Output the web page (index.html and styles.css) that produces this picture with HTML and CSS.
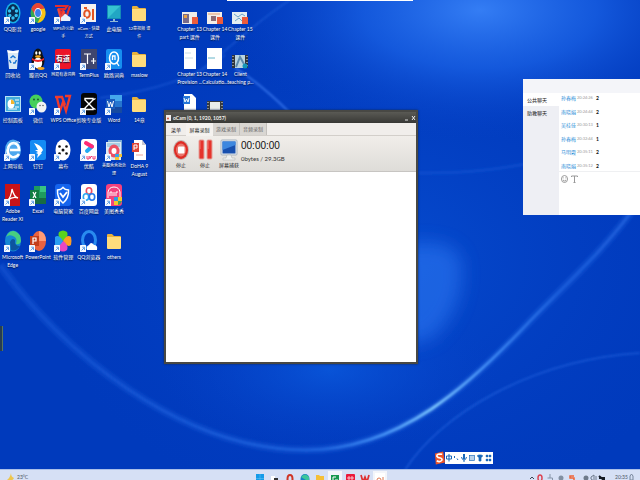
FILE: index.html
```
<!DOCTYPE html>
<html lang="zh-CN">
<head>
<meta charset="utf-8">
<title>oCam</title>
<link rel="stylesheet" href="styles.css">
</head>
<body>
<svg class="wallpaper" viewBox="0 0 640 480" preserveAspectRatio="none" aria-hidden="true">
  <defs>
    <radialGradient id="g1"><stop offset="0" stop-color="#347df4"/><stop offset=".45" stop-color="#1a62e6" stop-opacity=".75"/><stop offset="1" stop-color="#0640c8" stop-opacity="0"/></radialGradient>
    <radialGradient id="g2"><stop offset="0" stop-color="#2a73ee"/><stop offset="1" stop-color="#0c4cd4" stop-opacity="0"/></radialGradient>
    <radialGradient id="g3"><stop offset="0" stop-color="#0a58dc"/><stop offset="1" stop-color="#0640c8" stop-opacity="0"/></radialGradient>
    <linearGradient id="arc" gradientUnits="userSpaceOnUse" x1="0" y1="0" x2="640" y2="0"><stop offset="0" stop-color="#2a6ce8" stop-opacity=".2"/><stop offset=".5" stop-color="#2f7bf0" stop-opacity=".55"/><stop offset=".6" stop-color="#4a98fa" stop-opacity=".9"/><stop offset=".68" stop-color="#7cc6ff"/><stop offset=".76" stop-color="#4f9cff" stop-opacity=".8"/><stop offset=".88" stop-color="#2a70ea" stop-opacity=".5"/><stop offset="1" stop-color="#3a7cf0" stop-opacity=".5"/></linearGradient>
    <filter id="soft"><feGaussianBlur stdDeviation="1"/></filter>
    <filter id="haze" x="-50%" y="-50%" width="200%" height="200%"><feGaussianBlur stdDeviation="9"/></filter>
  </defs>
  <rect width="640" height="480" fill="#003abc"/>
  <ellipse cx="380" cy="260" rx="340" ry="260" fill="url(#g3)" opacity=".6"/>
  <ellipse cx="480" cy="10" rx="260" ry="130" fill="url(#g1)"/>
  <ellipse cx="330" cy="370" rx="170" ry="80" fill="url(#g3)" opacity=".8"/>
  <path d="M400 245Q455 236 461 262Q466 310 430 340L400 345Z" fill="#2870ec" opacity=".7" filter="url(#haze)"/>
  <g fill="none" filter="url(#soft)">
    <path d="M0 265C60 350 180 450 306 450C400 450 470 385 531 320C570 280 605 250 640 200" stroke="#2a70ea" stroke-opacity=".2" stroke-width="9"/>
    <path d="M0 265C60 350 180 450 306 450C400 450 470 385 531 320C570 280 605 250 640 200" stroke="url(#arc)" stroke-width="3"/>
    <path d="M405 470C440 415 530 360 640 353" stroke="#2f74ea" stroke-opacity=".4" stroke-width="2"/>
    <path d="M180 85C225 55 250 25 290 0M100 98C160 90 200 75 225 55" stroke="#3c7cf0" stroke-opacity=".3" stroke-width="2"/>
    <path d="M235 68C255 80 275 98 292 115" stroke="#4c8cff" stroke-opacity=".6" stroke-width="2"/>
    <path d="M418 173Q530 175 640 130" stroke="#2566e0" stroke-opacity=".3" stroke-width="3"/>
  </g>
</svg>
<svg width="0" height="0" class="sprite" aria-hidden="true">
  <symbol id="link" viewBox="0 0 6 7"><rect width="6" height="7" rx=".5" fill="#f5f9ff"/><path d="M1.5 5.5L4 3M2.2 2.2H4.5V5" fill="none" stroke="#3f8be0" stroke-width=".8"/></symbol>
  <symbol id="folder" viewBox="0 0 18 22"><path d="M2 5Q2 4 3 4H7L9 6H15Q16 6 16 7V18H2Z" fill="#e8b23c"/><path d="M2 7H16V18Q16 19 15 19H3Q2 19 2 18Z" fill="#ffdc7c"/></symbol>
</svg>

<main class="desktop">
  <nav class="icons apps" aria-label="桌面">
    <a href="#"><svg viewBox="0 0 18 22"><ellipse cx="9" cy="11" rx="7.5" ry="10.5" fill="#17aee8"/><ellipse cx="9" cy="11" rx="6" ry="9" fill="#092b52"/><g fill="#35bdf2"><circle cx="9" cy="6" r="1.7"/><circle cx="9" cy="16" r="1.7"/><circle cx="5.5" cy="9" r="1.7"/><circle cx="12.5" cy="9" r="1.7"/><circle cx="5.8" cy="13.5" r="1.7"/><circle cx="12.2" cy="13.5" r="1.7"/></g><use href="#link" y="15" width="6" height="7"/></svg><span>QQ影音</span></a>
    <a href="#"><svg viewBox="0 0 18 22"><ellipse cx="9" cy="11" rx="7.5" ry="10" fill="#34a853"/><path d="M2.3 6.5Q5 1 9 1T15.7 6.5L9 8Z" fill="#ea4335"/><path d="M15.7 6.5Q18 13 14 18Q11 21 8.5 21L12.5 13L11 7.3Z" fill="#fbc116"/><path d="M2.3 6.5L6 13L9 7Z" fill="#ea4335"/><ellipse cx="9" cy="11" rx="3.7" ry="5" fill="#fff"/><ellipse cx="9" cy="11" rx="2.9" ry="4" fill="#3b7ded"/><use href="#link" y="15" width="6" height="7"/></svg><span>google</span></a>
    <a href="#"><svg viewBox="0 0 18 22"><path d="M1 4H13L11 7H5L7 12L9 8L12 16L16 4" fill="none" stroke="#e62e2d" stroke-width="2.2"/><path d="M4 7L7 17L10 9" fill="none" stroke="#ef4b3d" stroke-width="2"/><path d="M7 19Q6 15 9 14Q11 10 14 14Q18 15 16 19Z" fill="#eaf1fb"/><use href="#link" y="15" width="6" height="7"/></svg><span class="long">WPS办公助<br>手</span></a>
    <a href="#"><svg viewBox="0 0 18 22"><rect x="1" y="2" width="15" height="18" fill="#f5f2f0"/><ellipse cx="7" cy="12" rx="2.8" ry="3.7" fill="none" stroke="#e45423" stroke-width="2"/><path d="M12 7H14V18H12ZM4 5H7V7H4Z" fill="#e45423"/><use href="#link" y="15" width="6" height="7"/></svg><span class="long">oCam - 快捷<br>方式</span></a>
    <a href="#"><svg viewBox="0 0 18 22"><rect x="2" y="3" width="14" height="14" fill="#148bb5"/><path d="M3 4H15V16H3Z" fill="#36c2d2"/><path d="M3 16L15 4V16Z" fill="#21a6c4"/><path d="M8 17H10V19H13V20H5V19H8Z" fill="#8fb7d6"/></svg><span>此电脑</span></a>
    <a href="#"><svg viewBox="0 0 18 22"><use href="#folder"/></svg><span class="long">12章视频 课<br>件</span></a>

    <a href="#"><svg viewBox="0 0 18 22"><path d="M3.500 3H14.500L13 21H5Z" fill="#dbe9f5"/><path d="M3 2L9 3L15 2L14 5H4Z" fill="#fff"/><path d="M6.500 10L9 8L11.500 10M12.500 12L11 15H9M7 15L5.500 12" fill="none" stroke="#1c76d2" stroke-width="1.5"/></svg><span>回收站</span></a>
    <a href="#"><svg viewBox="0 0 18 22"><ellipse cx="9" cy="13" rx="6.5" ry="8" fill="#111"/><ellipse cx="9" cy="7" rx="4.5" ry="6.5" fill="#111"/><ellipse cx="9" cy="15" rx="4.2" ry="5.5" fill="#fff"/><path d="M3 10Q9 14 15 10L15 12Q9 16 3 12Z" fill="#e8252a"/><ellipse cx="7.3" cy="5" rx="1.1" ry="1.8" fill="#fff"/><ellipse cx="10.7" cy="5" rx="1.1" ry="1.8" fill="#fff"/><ellipse cx="9" cy="8.5" rx="3" ry="1.2" fill="#f6a81c"/><ellipse cx="12" cy="20.5" rx="3.5" ry="1.4" fill="#f6a81c"/><use href="#link" y="15" width="6" height="7"/></svg><span>腾讯QQ</span></a>
    <a href="#"><svg viewBox="0 0 18 22"><rect x="1" y="1" width="16" height="20" rx="2" fill="#ec1528"/><text x="9" y="13" class="mark">有道</text><use href="#link" y="15" width="6" height="7"/></svg><span class="long">网易有道词典</span></a>
    <a href="#"><svg viewBox="0 0 18 22"><rect x="1" y="1" width="16" height="20" fill="#40466e"/><path d="M4 6H11M7.5 6V16M11 13H16M13.5 10V16" fill="none" stroke="#fff" stroke-width="1.2"/><use href="#link" y="15" width="6" height="7"/></svg><span>TermPlus</span></a>
    <a href="#"><svg viewBox="0 0 18 22"><rect x="1" y="1" width="16" height="20" rx="2" fill="#168ff0"/><ellipse cx="9" cy="10" rx="4.5" ry="6" fill="none" stroke="#fff" stroke-width="1.5"/><path d="M7.5 12V8H10V12M12 15L14 18" fill="none" stroke="#fff" stroke-width="1.3"/><use href="#link" y="15" width="6" height="7"/></svg><span>欧路词典</span></a>
    <a href="#"><svg viewBox="0 0 18 22"><use href="#folder"/></svg><span>maslow</span></a>

    <a href="#"><svg viewBox="0 0 18 22"><rect x="1" y="3" width="16" height="16" fill="#b8e3f5"/><rect x="2" y="4" width="14" height="14" fill="#43addc"/><ellipse cx="7" cy="11" rx="3.4" ry="4.5" fill="#fff"/><path d="M7 11V6.5Q10.5 7 10.5 11Z" fill="#f4b52c"/><path d="M11 7H15M12 10H15M11 14H15M4 16H13" stroke="#fff"/></svg><span>控制面板</span></a>
    <a href="#"><svg viewBox="0 0 18 22"><ellipse cx="7" cy="8.500" rx="6.500" ry="7" fill="#45cf5b"/><circle cx="5" cy="6.500" r=".9" fill="#174f2b"/><circle cx="9" cy="6.500" r=".9" fill="#174f2b"/><ellipse cx="12.500" cy="14" rx="5" ry="5.500" fill="#f0f2f2"/><circle cx="11" cy="12.500" r=".8" fill="#666"/><circle cx="14" cy="12.500" r=".8" fill="#666"/><use href="#link" y="15" width="6" height="7"/></svg><span>微信</span></a>
    <a href="#"><svg viewBox="0 0 18 22"><path d="M1 4H8L11 12M3 5L6 18L9 9L12 18L16 3H11" fill="none" stroke="#ef3b2d" stroke-width="2.300"/><use href="#link" y="15" width="6" height="7"/></svg><span>WPS Office</span></a>
    <a href="#"><svg viewBox="0 0 18 22"><rect x="1" y="0" width="16" height="22" rx="3" fill="#050505"/><path d="M5 5.500H13V7L9 11L5 7ZM5 16.500H13V15L9 11L5 15ZM13 7L15.500 5.500M13 15L15.500 16.500" fill="none" stroke="#fff" stroke-width="1.400"/><use href="#link" y="15" width="6" height="7"/></svg><span>剪映专业版</span></a>
    <a href="#"><svg viewBox="0 0 18 22"><path d="M5 2H17V8H5Z" fill="#45a7ec"/><path d="M5 8H17V14H5Z" fill="#2676cf"/><path d="M5 14H17V20H5Z" fill="#164aa0"/><rect x="1" y="6" width="9" height="10" fill="#1a5cbd"/><path d="M2.500 8L4 14L5.500 9L7 14L8.500 8" fill="none" stroke="#fff"/><use href="#link" y="15" width="6" height="7"/></svg><span>Word</span></a>
    <a href="#"><svg viewBox="0 0 18 22"><use href="#folder"/></svg><span>14章</span></a>

    <a href="#"><svg viewBox="0 0 18 22"><ellipse cx="9" cy="11" rx="8" ry="10.500" fill="#4ea8ee"/><path d="M15 15Q12 19 8 18Q3 16 4 10Q5 4 10 4Q15 5 15 11H6" fill="none" stroke="#fff" stroke-width="2.600"/><path d="M2 17Q0 12 7 6Q14 1 16 4" fill="none" stroke="#dff1ff"/><use href="#link" y="15" width="6" height="7"/></svg><span>上网导航</span></a>
    <a href="#"><svg viewBox="0 0 18 22"><rect x="1" y="1" width="16" height="20" rx="2" fill="#148bf4"/><path d="M5 4Q12 6 14 11L12 14H13L8 19L9 15L7 14L9 13L6 11L9 11Z" fill="#fff"/><use href="#link" y="15" width="6" height="7"/></svg><span>钉钉</span></a>
    <a href="#"><svg viewBox="0 0 18 22"><ellipse cx="9" cy="11" rx="7.500" ry="10.500" fill="#fff"/><g fill="#111"><circle cx="5.500" cy="7.500" r="1.300"/><circle cx="12.500" cy="7.500" r="1.300"/><circle cx="9" cy="11" r="1.500"/><circle cx="5.500" cy="14.500" r="1.300"/><circle cx="12.500" cy="14.500" r="1.300"/></g><use href="#link" y="15" width="6" height="7"/></svg><span>幕布</span></a>
    <a href="#"><svg viewBox="0 0 18 22"><rect x="1" y="0" width="16" height="22" rx="3" fill="#fff"/><path d="M7 12L12 7.500" stroke="#21aaf3" stroke-width="4" stroke-linecap="round"/><path d="M6 4L12 7.500" stroke="#ff2b75" stroke-width="4" stroke-linecap="round"/><path d="M7 17V20H9V17M10 20V17M12 17L10 19M13 17V20H15V17" fill="none" stroke="#ef3a74"/><use href="#link" y="15" width="6" height="7"/></svg><span>优酷</span></a>
    <a href="#"><svg viewBox="0 0 18 22"><path d="M3 1H17V18H3Z" fill="#7cadd8"/><rect x="1" y="3" width="15" height="18" fill="#dce9f3"/><path d="M2 4H15V8H2Z" fill="#a9cfe4"/><ellipse cx="9" cy="12" rx="5.500" ry="6.500" fill="#ec5063"/><ellipse cx="9" cy="12" rx="2.500" ry="3" fill="#fff"/><path d="M10 15H14V18H10Z" fill="#39a3e9"/><path d="M14 15H17V18H14ZM10 18H14V21H10Z" fill="#f7c332"/><use href="#link" y="15" width="6" height="7"/></svg><span class="long">美图秀秀批处<br>理</span></a>
    <a href="#"><svg viewBox="0 0 18 22"><path d="M4 1H12L16 6V21H4Z" fill="#fff"/><path d="M12 1V6H16" fill="#c8c8d0"/><rect x="2" y="4" width="7" height="9" fill="#dd4638"/><path d="M4 11V6H7V9H4" fill="none" stroke="#fff"/><path d="M6 16H13" stroke="#e9a69d"/></svg><span>DoHA 9<br>August</span></a>

    <a href="#"><svg viewBox="0 0 18 22"><rect x="1" y="0" width="15" height="22" fill="#c91318"/><path d="M4 16Q7 13 8 5Q10 13 14 14Q9 12 4 16" fill="none" stroke="#fff" stroke-width="1.300"/><use href="#link" y="15" width="6" height="7"/></svg><span>Adobe<br>Reader XI</span></a>
    <a href="#"><svg viewBox="0 0 18 22"><path d="M5 2H17V20H5Z" fill="#1f9b5e"/><path d="M11 2H17V8H11Z" fill="#39c481"/><path d="M5 14H17V20H5Z" fill="#176c42"/><rect x="1" y="6" width="9" height="10" fill="#107c41"/><path d="M4 8L7 14M7 8L4 14" stroke="#fff" stroke-width="1.200"/><use href="#link" y="15" width="6" height="7"/></svg><span>Excel</span></a>
    <a href="#"><svg viewBox="0 0 18 22"><rect x="1" y="0" width="16" height="22" rx="3" fill="#1564ed"/><path d="M3.500 6Q7 6 9 3.500Q11 6 14.500 6Q15 14 9 19Q3 14 3.500 6Z" fill="none" stroke="#fff" stroke-width="1.500"/><path d="M6 9L9 13L13 8" fill="none" stroke="#fff" stroke-width="1.800"/><use href="#link" y="15" width="6" height="7"/></svg><span>电脑管家</span></a>
    <a href="#"><svg viewBox="0 0 18 22"><rect x="1" y="0" width="16" height="22" rx="3" fill="#fff"/><g fill="none" stroke-width="1.600"><ellipse cx="9" cy="7" rx="2.700" ry="3.200" stroke="#ef4d62"/><ellipse cx="6" cy="13" rx="2.700" ry="3.200" stroke="#2aa8f2"/><ellipse cx="12" cy="13" rx="2.700" ry="3.200" stroke="#2678ec"/></g><use href="#link" y="15" width="6" height="7"/></svg><span>百度网盘</span></a>
    <a href="#"><svg viewBox="0 0 18 22"><rect x="1" y="0" width="16" height="22" rx="3" fill="#f4417d"/><path d="M3 14V8Q4 3 9 3T15 8V14M5 12V8H7V12M9 12V8M11 12V8H13" fill="none" stroke="#fff"/><path d="M9 13H13V17H9Z" fill="#2f9be7"/><path d="M13 13H17V17H13Z" fill="#f8c52d"/><path d="M9 17H13V21H9Z" fill="#f8c52d"/><path d="M13 17H17Q16 20 13 21Z" fill="#43a957"/><use href="#link" y="15" width="6" height="7"/></svg><span>美图秀秀</span></a>
    <i></i>

    <a href="#"><svg viewBox="0 0 18 22"><ellipse cx="9" cy="11" rx="8" ry="10.500" fill="#1587d4"/><path d="M2 7Q5 0 10 1Q17 3 17 11Q16 15 12 14Q14 8 9 6Q5 4 2 7Z" fill="#48cf80"/><path d="M6 12Q8 7 11 10Q10 16 16 16Q12 22 7 20Z" fill="#0d549f"/><use href="#link" y="15" width="6" height="7"/></svg><span>Microsoft<br>Edge</span></a>
    <a href="#"><svg viewBox="0 0 18 22"><ellipse cx="10" cy="11" rx="7" ry="10" fill="#e96240"/><path d="M10 1Q17 2 17 11H10Z" fill="#ff9b76"/><rect x="1" y="6" width="9" height="10" fill="#c43e1c"/><path d="M4 14V8H7V11H4" fill="none" stroke="#fff" stroke-width="1.200"/><use href="#link" y="15" width="6" height="7"/></svg><span>PowerPoint</span></a>
    <a href="#"><svg viewBox="0 0 18 22"><path d="M9 11Q3 7 5 2Q9-1 13 2Q15 7 9 11Z" fill="#5ad31f"/><path d="M9 11Q13 4 17 7Q18 11 17 15Q13 18 9 11Z" fill="#ff9e25"/><path d="M9 11Q15 15 13 20Q9 23 5 20Q3 15 9 11Z" fill="#e947c2"/><path d="M9 11Q5 18 1 15V7Q5 4 9 11Z" fill="#299df1"/><use href="#link" y="15" width="6" height="7"/></svg><span>软件管理</span></a>
    <a href="#"><svg viewBox="0 0 18 22"><ellipse cx="9" cy="10" rx="6.500" ry="8.500" fill="none" stroke="#298bef" stroke-width="3"/><path d="M7 20Q6 16 9 15Q11 11 14 15Q18 15 17 20Z" fill="#fff"/><use href="#link" y="15" width="6" height="7"/></svg><span>QQ浏览器</span></a>
    <a href="#"><svg viewBox="0 0 18 22"><use href="#folder"/></svg><span>others</span></a>
  </nav>
  <nav class="icons files" aria-label="文件">
    <a href="#"><svg viewBox="0 0 18 22"><rect x="1" y="10" width="15" height="12" fill="#eeece8"/><path d="M2 12H8V21H2Z" fill="#776b8b"/><path d="M3 13H6V16H3Z" fill="#e8a242"/><rect x="11" y="15" width="6" height="7" fill="#ed5c3c"/></svg><span>Chapter 13<br>part 课件</span></a>
    <a href="#"><svg viewBox="0 0 18 22"><rect x="1" y="10" width="15" height="12" fill="#f3eee9"/><path d="M2 12H14" stroke="#e4a071"/><rect x="5" y="14" width="5" height="5" fill="#8b6c76"/><rect x="11" y="15" width="6" height="7" fill="#ed5c3c"/></svg><span>Chapter 14<br>课件</span></a>
    <a href="#"><svg viewBox="0 0 18 22"><rect x="1" y="10" width="15" height="12" fill="#e3eef1"/><path d="M3 12L7 15L11 12L14 14M4 19L8 16L11 19" fill="none" stroke="#6ba5ca"/><rect x="11" y="15" width="6" height="7" fill="#ed5c3c"/></svg><span>Chapter 15<br>课件</span></a>
    <a href="#"><svg viewBox="0 0 18 22"><rect x="3" y="1" width="12" height="21" fill="#fff"/><path d="M4 11H12M4 6H10" stroke="#c9dce6"/></svg><span>Chapter 13<br>Provision ...</span></a>
    <a href="#"><svg viewBox="0 0 18 22"><rect x="1" y="1" width="15" height="21" fill="#fff"/><path d="M2 11H9" stroke="#66b4c8"/></svg><span>Chapter 14<br>Calculatio...</span></a>
    <a href="#"><svg viewBox="0 0 18 22"><rect x="1" y="8" width="16" height="13" fill="#30343b"/><rect x="4" y="8" width="10" height="13" fill="#b9d4e2"/><path d="M2 9V21M16 9V21" stroke="#e5e8e9" stroke-dasharray="1 2"/><path d="M5 20L9 10L13 17" fill="none" stroke="#5e8bae" stroke-width="2"/><circle cx="14" cy="19" r="2.500" fill="#1495b7"/></svg><span>Client<br>teaching p...</span></a>
    <a href="#" aria-label="Word"><svg viewBox="0 0 18 22"><path d="M3 1H11L15 5V22H3Z" fill="#fff"/><rect x="2" y="3" width="7" height="8" fill="#2877d7"/><path d="M3 5L4 9L5.500 6L7 9L8 5" fill="none" stroke="#fff"/></svg></a>
    <a href="#" aria-label="视频"><svg viewBox="0 0 18 22"><rect x="1" y="8" width="16" height="13" fill="#363b40"/><rect x="4" y="9" width="10" height="13" fill="#e9eee9"/><path d="M2 9V21M16 9V21" stroke="#e5e8e9" stroke-dasharray="1 2"/></svg></a>
  </nav>

  <div class="topstrip"></div>
  <div class="sidetab"></div>

  <section class="recorder" aria-label="oCam">
    <header class="titlebar">
      <svg class="logo" viewBox="0 0 5 6"><rect width="5" height="6" fill="#f1eeee"/><circle cx="2" cy="3.500" r="1" fill="#d5543b"/></svg>
      <h1>oCam (0, 1, 1920, 1057)</h1>
      <button aria-label="最小化"><svg viewBox="0 0 5 6"><path d="M1 5H4" stroke="#ddd"/></svg></button>
      <button aria-label="关闭"><svg viewBox="0 0 5 6"><path d="M1 1L4 5M4 1L1 5" stroke="#eee"/></svg></button>
    </header>
    <div class="tabs"><button>菜单</button><button class="active">屏幕录制</button><button class="dim">游戏录制</button><button class="dim">音频录制</button></div>
    <div class="tools">
      <button><svg viewBox="0 0 18 22"><ellipse cx="9" cy="11" rx="8" ry="10" fill="#c4b4b1"/><ellipse cx="9" cy="11" rx="7" ry="9" fill="#df2c25"/><ellipse cx="9" cy="11" rx="5" ry="6.500" fill="#e9766d"/><rect x="6" y="7.500" width="6.500" height="7" rx="1" fill="#fff"/></svg><span>停止</span></button>
      <button><svg viewBox="0 0 18 22"><rect x="3" y="1" width="5" height="19" rx="1" fill="#e5342c" stroke="#e4a19a"/><rect x="11" y="1" width="5" height="19" rx="1" fill="#e5342c" stroke="#e4a19a"/><path d="M4 2V10M12 2V10" stroke="#f27a70"/></svg><span>停止</span></button>
      <button><svg viewBox="0 0 18 22"><rect x="1" y="1" width="16" height="15" rx="1" fill="#e8eef4" stroke="#a7b2bd"/><rect x="2.500" y="2.500" width="13" height="12" fill="#174fae"/><path d="M2.500 2.500H15.500V6L2.500 11Z" fill="#3d87df"/><path d="M7 16H11L12 19H15V21H3V19H6Z" fill="#eef0ef" stroke="#a9adac" stroke-width=".500"/></svg><span>屏幕捕获</span></button>
      <div class="status"><strong>00:00:00</strong><span>0bytes / 29.3GB</span></div>
    </div>
    <div class="canvas"></div>
  </section>

  <aside class="chat" aria-label="聊天">
    <header></header>
    <div class="chatbody">
      <div class="rooms"><button class="active">公共聊天</button><button>助教聊天</button></div>
      <div class="talk">
        <ul>
          <li><b>孙春梅</b><time>20:24:26</time><span>2</span></li>
          <li><b>南晓娟</b><time>20:24:44</time><span>2</span></li>
          <li><b>吴桂佳</b><time>20:30:13</time><span>1</span></li>
          <li><b>孙春梅</b><time>20:32:44</time><span>1</span></li>
          <li><b>马明霞</b><time>20:35:11</time><span>2</span></li>
          <li><b>南晓娟</b><time>20:35:12</time><span>2</span></li>
        </ul>
        <div class="compose">
          <button aria-label="表情"><svg viewBox="0 0 7 8"><ellipse cx="3.500" cy="4" rx="3" ry="3.500"/><path d="M2 5Q3.500 7 5 5M2.300 2.500V3.300M4.700 2.500V3.300"/></svg></button>
          <button aria-label="文字"><svg viewBox="0 0 7 8"><path d="M.500 2V1H6.500V2M3.500 1V7.500M2.500 7.500H4.500"/></svg></button>
        </div>
      </div>
    </div>
  </aside>

  <div class="ime">
    <svg class="sogou" viewBox="0 0 12 14"><path d="M1 2L10 0L12 12L2 14Z" fill="#ef5527"/><path d="M9 3Q3 2 3 5Q4 7 7 7Q10 8 8 10Q6 12 3 10" fill="none" stroke="#fff" stroke-width="1.700"/></svg>
    <svg class="keys" viewBox="0 0 48 12" fill="none" stroke="#1868b9" stroke-width="1"><path d="M1.500 4H6.500V7H1.500ZM4 2V9.500M9.500 4V6M12 6.500L13 8"/><rect x="18.500" y="2.500" width="1" height="4" fill="#1868b9"/><path d="M16.500 5Q17 8 19 8T21.500 5M19 8V10"/><rect x="24.500" y="3.500" width="5" height="5" stroke-width=".700"/><path d="M25 5H29M25 7H29" stroke-width=".600"/><path d="M32.500 3.500L34 3H36L37.500 3.500L37 5H36V9H34V5H33Z" fill="#1868b9" stroke-width=".700"/><path d="M41 3H43V5H41ZM44 3H46V5H44ZM41 7H43V9H41ZM44 7H46V9H44Z" fill="#1868b9" stroke-width=".400"/></svg>
  </div>
</main>

<footer class="taskbar">
  <div class="weather"><svg viewBox="0 0 8 8"><path d="M4 0Q3 5 0 7Q5 9 7 5Q4 4 4 0Z" fill="#edc64f"/></svg><span>23°C</span></div>
  <div class="pinned">
    <svg viewBox="0 0 10 10"><path d="M1 1H9V10H1Z" fill="#159be9"/><path d="M5 1V10M1 5.500H9" stroke="#6cc4f2" stroke-width=".500"/></svg>
    <svg viewBox="0 0 10 10"><path d="M1 3H5V9H1Z" fill="#fff"/><path d="M4 5H8V10H4Z" fill="#333"/></svg>
    <svg viewBox="0 0 10 10"><ellipse cx="5" cy="6" rx="2.500" ry="4" fill="none" stroke="#cf3425" stroke-width="2"/></svg>
    <svg viewBox="0 0 10 10"><ellipse cx="5" cy="6" rx="4.500" ry="5" fill="#1682c5"/><path d="M1 4Q5-1 9 4V7H6Z" fill="#3bc69a"/></svg>
    <svg viewBox="0 0 10 10"><path d="M1 2H4L5 3H9V10H1Z" fill="#f5bf37"/></svg>
    <svg viewBox="0 0 10 10" class="on"><rect x="1" y="2" width="8" height="8" fill="#18984e"/><path d="M3 9V4H6M5 7H8" stroke="#fff" fill="none"/></svg>
    <svg viewBox="0 0 10 10"><rect x="1" y="1" width="9" height="9" rx="1" fill="#eb183a"/><path d="M2 5H9M4 3V8M7 3V8" stroke="#fff" stroke-width=".700"/></svg>
    <svg viewBox="0 0 10 10"><path d="M1 2L3 9L5 4L7 9L9 2" fill="none" stroke="#df3131" stroke-width="1.700"/></svg>
    <svg viewBox="0 0 10 10" class="on"><rect width="10" height="10" fill="#fff"/><circle cx="4" cy="7" r="2" fill="none" stroke="#df7752"/><path d="M8 4V10" stroke="#df7752"/></svg>
  </div>
  <div class="tray">
    <svg viewBox="0 0 94 8" fill="none" stroke="#3d4654"><path d="M1 6L3 4L5 6"/><ellipse cx="11" cy="5" rx="2" ry="3" stroke="#dc4352" stroke-width="1.500"/><path d="M21 1V5M18.500 5H23.500V8" stroke="#8694a8"/><circle cx="32" cy="5" r="2.500" fill="#8290a3" stroke="none"/><path d="M45 3H41V5H45V8H41" stroke="#f06337" stroke-width="1.500"/><circle cx="57" cy="5" r="2.500" fill="#6e7a8b" stroke="none"/><path d="M62 4L65 2V8L62 6ZM67 3V7" stroke="#6e7a8b"/><path d="M70 3L76 8M70 5H75V8" stroke="#151b24" stroke-width="2"/></svg>
    <time>20:35</time>
    <svg class="bell" viewBox="0 0 5 8"><path d="M1 7V3L2.500 1L4 3V7Z" fill="none" stroke="#77869b"/></svg>
  </div>
</footer>
</body>
</html>
```
FILE: styles.css
```
* { box-sizing: border-box; }
body {
  margin: 0;
  height: 100vh;
  overflow: hidden;
  display: flex;
  flex-direction: column;
  background: #003abc;
  color: #222;
  font: 5px/8px Lato, "Liberation Sans", "Noto Sans CJK SC", sans-serif;
}
button { border: 0; padding: 0; background: none; font: inherit; color: inherit; }
svg { display: block; }
.sprite { position: absolute; }
.wallpaper { position: absolute; inset: 0; width: 100%; height: 100%; z-index: -1; }
.desktop { position: relative; flex: 1; min-height: 0; display: flex; align-items: flex-start; gap: 25px; }

.icons { display: grid; height: 273px; grid-auto-rows: 1fr; }
.apps { width: 152px; grid-template-columns: repeat(6, 1fr); }
.files { width: 76px; height: 136px; grid-template-columns: repeat(3, 1fr); }
.icons a {
  display: flex;
  flex-direction: column;
  align-items: center;
  gap: 1px;
  min-width: 0;
  min-height: 0;
  padding-top: 2px;
  color: #fff;
  text-align: center;
  text-decoration: none;
  white-space: nowrap;
  text-shadow: 0 1px 1px #001540;
}
.icons svg { width: 18px; height: 22px; flex: none; }
.icons .long { font-size: 4px; }
.mark { fill: #fff; font-size: 7px; font-weight: bold; text-anchor: middle; }

.topstrip { position: absolute; left: 227px; top: 0; width: 186px; height: 1px; background: #fff; }
.sidetab { position: absolute; left: 0; top: 326px; width: 3px; height: 25px; background: #263d52; border-right: 1px solid #59755a; }

.recorder {
  position: absolute;
  left: 164px;
  top: 110px;
  width: 254px;
  height: 254px;
  display: flex;
  flex-direction: column;
  border: 2px solid #484844;
  background: #fff;
  box-shadow: 0 0 2px #12264e;
}
.titlebar { display: flex; align-items: center; gap: 2px; height: 11px; background: linear-gradient(#5a5a55, #383835); color: #f4f4f0; }
.titlebar h1 { flex: 1; margin: 0; font-size: 5px; line-height: 8px; font-weight: bold; }
.titlebar svg { width: 5px; height: 6px; }
.tabs { display: flex; height: 13px; background: #f1eeeb; border-bottom: 1px solid #d3cfca; line-height: 12px; }
.tabs button { width: 27px; height: 13px; color: #222; }
.tabs button:first-child { width: 20px; }
.tabs .active { background: #f5f2ef; }
.tabs .dim { background: #d9d6d2; border-right: 1px solid #c3c0bc; color: #666; height: 12px; }
.tools { display: flex; gap: 6px; height: 36px; padding: 3px 6px; background: linear-gradient(#f1eeea, #dedcd8); border-bottom: 1px solid #c7c5c2; }
.tools button { display: flex; flex-direction: column; align-items: center; width: 18px; white-space: nowrap; color: #222; }
.tools svg { width: 18px; height: 22px; flex: none; }
.status { display: flex; flex-direction: column; gap: 3px; margin-left: -3px; white-space: nowrap; }
.status strong { font: 10px/13px "Liberation Sans", sans-serif; color: #111; }
.status span { font-size: 6px; line-height: 8px; color: #333; }
.canvas { flex: 1; background: #fff; }

.chat { position: absolute; right: 0; top: 79px; width: 117px; height: 136px; display: flex; flex-direction: column; background: #fff; }
.chat header { height: 14px; background: #f4f5f9; }
.chatbody { flex: 1; display: flex; }
.rooms { width: 36px; background: #eeeff4; display: flex; flex-direction: column; }
.rooms button { height: 13px; padding-left: 4px; text-align: left; }
.rooms .active { background: #fff; }
.talk { flex: 1; }
.talk ul { margin: 0; padding: 1px 0; height: 79px; display: flex; flex-direction: column; justify-content: space-between; list-style: none; border-bottom: 1px solid #eff0f2; }
.talk li { display: flex; gap: 1px; padding-left: 2px; }
.talk b { color: #2f8fd8; font-weight: normal; }
.talk time { width: 18px; color: #999; font-size: 4px; }
.talk li span { color: #111; font-weight: bold; }
.compose { display: flex; gap: 3px; padding: 3px 2px; }
.compose svg { width: 7px; height: 8px; fill: none; stroke: #999; stroke-width: 1; }

.ime { position: absolute; left: 434px; top: 451px; display: flex; align-items: center; }
.sogou { width: 11px; height: 14px; }
.keys { width: 48px; height: 12px; background: #fff; }

.taskbar { position: relative; display: grid; grid-template-columns: 1fr auto 1fr; height: 11px; overflow: hidden; background: #d6e0f5; border-top: 1px solid #a9bfe9; color: #4c5566; }
.weather { display: flex; gap: 2px; padding: 3px 0 0 7px; }
.weather svg { width: 8px; height: 8px; }
.pinned { display: flex; gap: 5px; padding-top: 3px; }
.pinned svg { width: 10px; height: 10px; }
.pinned .on { background: #f3f5fa; box-shadow: 0 0 0 2px #f3f5fa; }
.tray { display: flex; justify-content: flex-end; padding: 3px 6px 0 0; }
.tray svg { width: 94px; height: 8px; }
.tray time { margin-left: -8px; width: 14px; }
.tray .bell { width: 5px; }
```
